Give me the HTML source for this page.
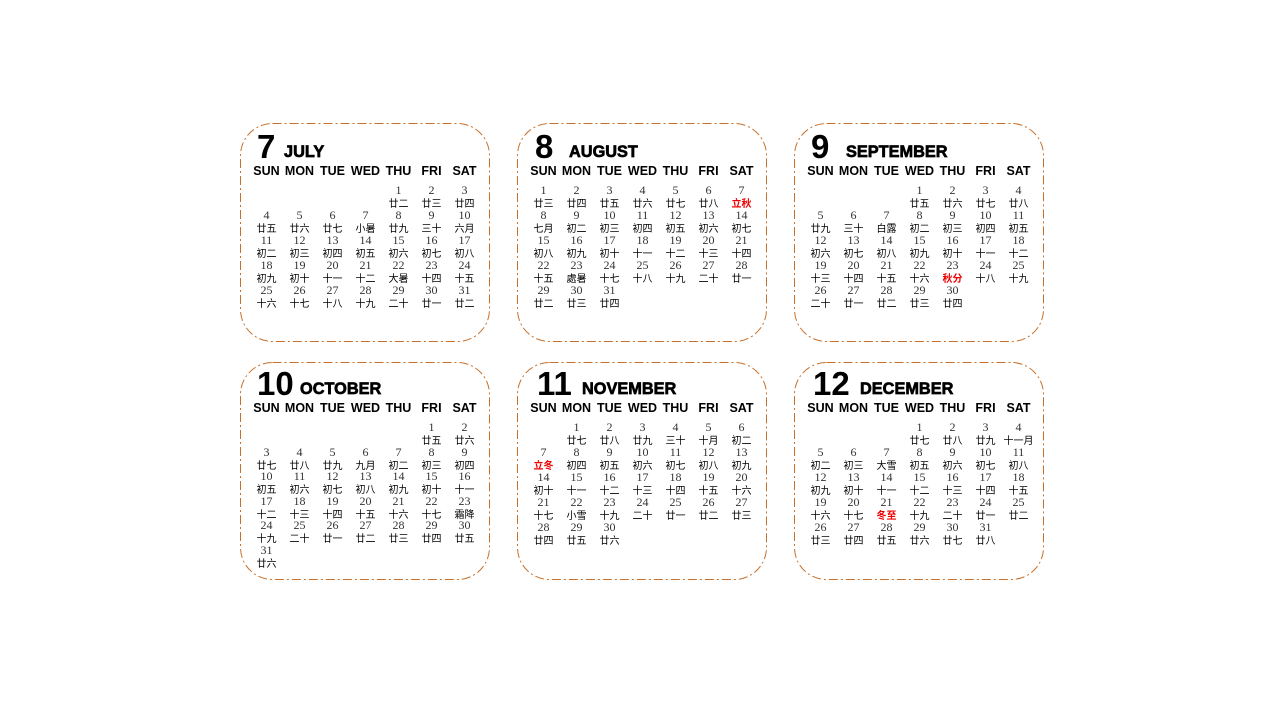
<!DOCTYPE html>
<html><head><meta charset="utf-8"><style>
body{margin:0;width:1280px;height:720px;background:#fff;position:relative;overflow:hidden;font-family:"Liberation Sans",sans-serif}
.c{position:absolute;width:250px;height:219px}
.c svg{position:absolute;left:0;top:0}
.t{position:absolute;left:17px;top:5px;white-space:nowrap;color:#000}
.t b{font-size:33px;font-weight:bold;vertical-align:baseline}
.t span{font-size:17px;font-weight:900;letter-spacing:0;margin-left:9px;display:inline-block;position:relative;top:-1px;transform:scaleX(0.96);transform-origin:left;-webkit-text-stroke:0.7px #000}
.h,.g{position:absolute;left:10px;display:grid;grid-template-columns:repeat(7,33px)}
.h{top:41px;font-size:12.5px;font-weight:bold;text-align:center;line-height:14px}
.g{top:61px;grid-auto-rows:25px;text-align:center}
.g div{font-family:"Liberation Serif",serif;font-size:12px;line-height:12px;color:#333}
.g div i{display:block;font-style:normal;font-family:"Noto Sans CJK SC",sans-serif;font-size:10px;line-height:13px;color:#000}
.g div i.r{color:#e00;font-weight:bold}
.bt .h{top:39px}.bt .g{top:59px}.bt .t{top:3px}
</style></head><body>

<div class="c" style="left:240px;top:123px"><svg width="250" height="219"><rect x="0.5" y="0.5" width="249" height="218" rx="32" fill="none" stroke="#c8702a" stroke-width="1" stroke-dasharray="9,3,2,3"/></svg>
<div class="t"><b>7</b><span>JULY</span></div>
<div class="h"><span>SUN</span><span>MON</span><span>TUE</span><span>WED</span><span>THU</span><span>FRI</span><span>SAT</span></div>
<div class="g"><div></div><div></div><div></div><div></div>
<div>1<i>廿二</i></div><div>2<i>廿三</i></div><div>3<i>廿四</i></div>
<div>4<i>廿五</i></div><div>5<i>廿六</i></div><div>6<i>廿七</i></div><div>7<i>小暑</i></div><div>8<i>廿九</i></div><div>9<i>三十</i></div><div>10<i>六月</i></div>
<div>11<i>初二</i></div><div>12<i>初三</i></div><div>13<i>初四</i></div><div>14<i>初五</i></div><div>15<i>初六</i></div><div>16<i>初七</i></div><div>17<i>初八</i></div>
<div>18<i>初九</i></div><div>19<i>初十</i></div><div>20<i>十一</i></div><div>21<i>十二</i></div><div>22<i>大暑</i></div><div>23<i>十四</i></div><div>24<i>十五</i></div>
<div>25<i>十六</i></div><div>26<i>十七</i></div><div>27<i>十八</i></div><div>28<i>十九</i></div><div>29<i>二十</i></div><div>30<i>廿一</i></div><div>31<i>廿二</i></div>
</div></div>

<div class="c" style="left:517px;top:123px"><svg width="250" height="219"><rect x="0.5" y="0.5" width="249" height="218" rx="32" fill="none" stroke="#c8702a" stroke-width="1" stroke-dasharray="9,3,2,3"/></svg>
<div class="t" style="left:18px"><b>8</b><span style="margin-left:16px">AUGUST</span></div>
<div class="h"><span>SUN</span><span>MON</span><span>TUE</span><span>WED</span><span>THU</span><span>FRI</span><span>SAT</span></div>
<div class="g">
<div>1<i>廿三</i></div><div>2<i>廿四</i></div><div>3<i>廿五</i></div><div>4<i>廿六</i></div><div>5<i>廿七</i></div><div>6<i>廿八</i></div><div>7<i class="r">立秋</i></div>
<div>8<i>七月</i></div><div>9<i>初二</i></div><div>10<i>初三</i></div><div>11<i>初四</i></div><div>12<i>初五</i></div><div>13<i>初六</i></div><div>14<i>初七</i></div>
<div>15<i>初八</i></div><div>16<i>初九</i></div><div>17<i>初十</i></div><div>18<i>十一</i></div><div>19<i>十二</i></div><div>20<i>十三</i></div><div>21<i>十四</i></div>
<div>22<i>十五</i></div><div>23<i>處暑</i></div><div>24<i>十七</i></div><div>25<i>十八</i></div><div>26<i>十九</i></div><div>27<i>二十</i></div><div>28<i>廿一</i></div>
<div>29<i>廿二</i></div><div>30<i>廿三</i></div><div>31<i>廿四</i></div>
</div></div>

<div class="c" style="left:794px;top:123px"><svg width="250" height="219"><rect x="0.5" y="0.5" width="249" height="218" rx="32" fill="none" stroke="#c8702a" stroke-width="1" stroke-dasharray="9,3,2,3"/></svg>
<div class="t"><b>9</b><span style="margin-left:17px">SEPTEMBER</span></div>
<div class="h"><span>SUN</span><span>MON</span><span>TUE</span><span>WED</span><span>THU</span><span>FRI</span><span>SAT</span></div>
<div class="g"><div></div><div></div><div></div>
<div>1<i>廿五</i></div><div>2<i>廿六</i></div><div>3<i>廿七</i></div><div>4<i>廿八</i></div>
<div>5<i>廿九</i></div><div>6<i>三十</i></div><div>7<i>白露</i></div><div>8<i>初二</i></div><div>9<i>初三</i></div><div>10<i>初四</i></div><div>11<i>初五</i></div>
<div>12<i>初六</i></div><div>13<i>初七</i></div><div>14<i>初八</i></div><div>15<i>初九</i></div><div>16<i>初十</i></div><div>17<i>十一</i></div><div>18<i>十二</i></div>
<div>19<i>十三</i></div><div>20<i>十四</i></div><div>21<i>十五</i></div><div>22<i>十六</i></div><div>23<i class="r">秋分</i></div><div>24<i>十八</i></div><div>25<i>十九</i></div>
<div>26<i>二十</i></div><div>27<i>廿一</i></div><div>28<i>廿二</i></div><div>29<i>廿三</i></div><div>30<i>廿四</i></div>
</div></div>

<div class="c bt" style="left:240px;top:362px"><svg width="250" height="219"><rect x="0.5" y="0.5" width="249" height="217" rx="32" fill="none" stroke="#c8702a" stroke-width="1" stroke-dasharray="9,3,2,3"/></svg>
<div class="t"><b>10</b><span style="margin-left:6px">OCTOBER</span></div>
<div class="h"><span>SUN</span><span>MON</span><span>TUE</span><span>WED</span><span>THU</span><span>FRI</span><span>SAT</span></div>
<div class="g" style="grid-auto-rows:24.5px"><div></div><div></div><div></div><div></div><div></div>
<div>1<i>廿五</i></div><div>2<i>廿六</i></div>
<div>3<i>廿七</i></div><div>4<i>廿八</i></div><div>5<i>廿九</i></div><div>6<i>九月</i></div><div>7<i>初二</i></div><div>8<i>初三</i></div><div>9<i>初四</i></div>
<div>10<i>初五</i></div><div>11<i>初六</i></div><div>12<i>初七</i></div><div>13<i>初八</i></div><div>14<i>初九</i></div><div>15<i>初十</i></div><div>16<i>十一</i></div>
<div>17<i>十二</i></div><div>18<i>十三</i></div><div>19<i>十四</i></div><div>20<i>十五</i></div><div>21<i>十六</i></div><div>22<i>十七</i></div><div>23<i>霜降</i></div>
<div>24<i>十九</i></div><div>25<i>二十</i></div><div>26<i>廿一</i></div><div>27<i>廿二</i></div><div>28<i>廿三</i></div><div>29<i>廿四</i></div><div>30<i>廿五</i></div>
<div>31<i>廿六</i></div>
</div></div>

<div class="c bt" style="left:517px;top:362px"><svg width="250" height="219"><rect x="0.5" y="0.5" width="249" height="217" rx="32" fill="none" stroke="#c8702a" stroke-width="1" stroke-dasharray="9,3,2,3"/></svg>
<div class="t" style="left:20px"><b>11</b><span style="margin-left:10px">NOVEMBER</span></div>
<div class="h"><span>SUN</span><span>MON</span><span>TUE</span><span>WED</span><span>THU</span><span>FRI</span><span>SAT</span></div>
<div class="g"><div></div>
<div>1<i>廿七</i></div><div>2<i>廿八</i></div><div>3<i>廿九</i></div><div>4<i>三十</i></div><div>5<i>十月</i></div><div>6<i>初二</i></div>
<div>7<i class="r">立冬</i></div><div>8<i>初四</i></div><div>9<i>初五</i></div><div>10<i>初六</i></div><div>11<i>初七</i></div><div>12<i>初八</i></div><div>13<i>初九</i></div>
<div>14<i>初十</i></div><div>15<i>十一</i></div><div>16<i>十二</i></div><div>17<i>十三</i></div><div>18<i>十四</i></div><div>19<i>十五</i></div><div>20<i>十六</i></div>
<div>21<i>十七</i></div><div>22<i>小雪</i></div><div>23<i>十九</i></div><div>24<i>二十</i></div><div>25<i>廿一</i></div><div>26<i>廿二</i></div><div>27<i>廿三</i></div>
<div>28<i>廿四</i></div><div>29<i>廿五</i></div><div>30<i>廿六</i></div>
</div></div>

<div class="c bt" style="left:794px;top:362px"><svg width="250" height="219"><rect x="0.5" y="0.5" width="249" height="217" rx="32" fill="none" stroke="#c8702a" stroke-width="1" stroke-dasharray="9,3,2,3"/></svg>
<div class="t" style="left:19px"><b>12</b><span style="margin-left:10px">DECEMBER</span></div>
<div class="h"><span>SUN</span><span>MON</span><span>TUE</span><span>WED</span><span>THU</span><span>FRI</span><span>SAT</span></div>
<div class="g"><div></div><div></div><div></div>
<div>1<i>廿七</i></div><div>2<i>廿八</i></div><div>3<i>廿九</i></div><div>4<i>十一月</i></div>
<div>5<i>初二</i></div><div>6<i>初三</i></div><div>7<i>大雪</i></div><div>8<i>初五</i></div><div>9<i>初六</i></div><div>10<i>初七</i></div><div>11<i>初八</i></div>
<div>12<i>初九</i></div><div>13<i>初十</i></div><div>14<i>十一</i></div><div>15<i>十二</i></div><div>16<i>十三</i></div><div>17<i>十四</i></div><div>18<i>十五</i></div>
<div>19<i>十六</i></div><div>20<i>十七</i></div><div>21<i class="r">冬至</i></div><div>22<i>十九</i></div><div>23<i>二十</i></div><div>24<i>廿一</i></div><div>25<i>廿二</i></div>
<div>26<i>廿三</i></div><div>27<i>廿四</i></div><div>28<i>廿五</i></div><div>29<i>廿六</i></div><div>30<i>廿七</i></div><div>31<i>廿八</i></div>
</div></div>

</body></html>
